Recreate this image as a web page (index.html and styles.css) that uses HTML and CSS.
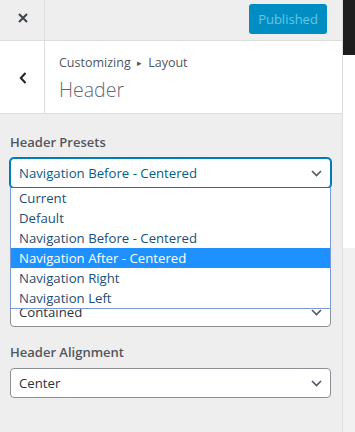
FILE: index.html
```html
<!DOCTYPE html>
<html lang="en">
<head>
<meta charset="utf-8">
<title>Customizer – Header</title>
<link rel="stylesheet" href="styles.css">
</head>
<body>
<div class="app">
  <aside class="sidebar">
    <div class="topbar">
      <button class="icon-btn close" aria-label="Close">
        <svg width="10" height="10" viewBox="0 0 10 10"><path d="M1 1L9 9M9 1L1 9" stroke="#3c434a" stroke-width="2" fill="none"/></svg>
      </button>
      <div class="grow"></div>
      <button class="publish" disabled>Published</button>
    </div>
    <div class="section-head">
      <button class="icon-btn back" aria-label="Back">
        <svg width="8" height="12" viewBox="0 0 8 12"><path d="M6.5 1L1.8 6L6.5 11" stroke="#1d2327" stroke-width="2" fill="none"/></svg>
      </button>
      <div class="titles">
        <div class="crumb">Customizing <span class="arrow">&#9656;</span> Layout</div>
        <div class="title">Header</div>
      </div>
    </div>
    <div class="controls">
      <div class="control presets">
        <div class="label">Header Presets</div>
        <div class="select-wrap">
          <div class="select focused">
            <span>Navigation Before - Centered</span>
            <svg class="chev" width="11" height="7" viewBox="0 0 11 7"><path d="M1 1L5.5 5.5L10 1" stroke="#50575e" stroke-width="1.6" fill="none"/></svg>
          </div>
          <ul class="dropdown">
            <li>Current</li>
            <li>Default</li>
            <li>Navigation Before - Centered</li>
            <li class="active">Navigation After - Centered</li>
            <li>Navigation Right</li>
            <li>Navigation Left</li>
          </ul>
        </div>
      </div>
      <div class="control">
        <div class="select">
          <span>Contained</span>
          <svg class="chev" width="11" height="7" viewBox="0 0 11 7"><path d="M1 1L5.5 5.5L10 1" stroke="#50575e" stroke-width="1.6" fill="none"/></svg>
        </div>
      </div>
      <div class="control">
        <div class="label">Header Alignment</div>
        <div class="select">
          <span>Center</span>
          <svg class="chev" width="11" height="7" viewBox="0 0 11 7"><path d="M1 1L5.5 5.5L10 1" stroke="#50575e" stroke-width="1.6" fill="none"/></svg>
        </div>
      </div>
    </div>
  </aside>
  <div class="preview">
    <div class="preview-bar"></div>
    <div class="preview-page"></div>
  </div>
</div>
</body>
</html>
```
FILE: styles.css
```css
* { box-sizing: border-box; }
html, body { margin: 0; padding: 0; }
body {
  font-family: "Open Sans", "Noto Sans", sans-serif;
  font-size: 13px;
  color: #50575e;
  background: #f1f1f1;
}
.app {
  display: flex;
  height: 432px;
  overflow: hidden;
}
.sidebar {
  width: 343px;
  flex: none;
  background: #eeeeee;
  border-right: 1px solid #dddddd;
  display: flex;
  flex-direction: column;
}
.topbar {
  height: 41px;
  display: flex;
  align-items: flex-start;
  border-bottom: 1px solid #dddddd;
}
.grow { flex: 1; }
.icon-btn {
  width: 45px;
  border: 0;
  border-right: 1px solid #dddddd;
  background: transparent;
  padding: 0;
  display: flex;
  align-items: center;
  justify-content: center;
}
.close { height: 40px; padding-bottom: 4px; padding-left: 1px; }
.publish {
  margin-top: 4px;
  margin-right: 15px;
  width: 78px;
  height: 30px;
  border: 0;
  border-radius: 3px;
  background: #008ec2;
  color: #66c6e4;
  font-family: inherit;
  font-size: 13px;
  padding: 0 0 1px;
}
.section-head {
  height: 73px;
  background: #ffffff;
  border-bottom: 1px solid #dddddd;
  display: flex;
}
.back { height: 72px; padding-top: 1px; padding-left: 1px; }
.titles {
  padding: 13px 0 0 14px;
}
.crumb {
  font-size: 12.5px;
  line-height: 18px;
  color: #50575e;
}
.arrow {
  font-size: 9px;
  position: relative;
  top: -1px;
  margin: 0 3px;
}
.title {
  margin-top: 3px;
  font-size: 19.5px;
  font-weight: 300;
  line-height: 28px;
  color: #646970;
}
.controls {
  padding: 18px 11px 0 10px;
}
.control { margin-bottom: 15px; }
.control.presets { margin-bottom: 109px; }
.label {
  font-size: 13px;
  font-weight: 600;
  line-height: 20px;
  margin-bottom: 6px;
  color: #50575e;
}
.select-wrap { position: relative; }
.select {
  height: 30px;
  border: 1px solid #8c8f94;
  border-radius: 4px;
  background: #ffffff;
  padding: 0 8px 0 8px;
  display: flex;
  align-items: center;
  justify-content: space-between;
  color: #2c3338;
  font-size: 13.2px;
}
.select.focused {
  border-color: #007cba;
  box-shadow: 0 0 0 1px #007cba;
  color: #016087;
}
.chev { margin-top: 1px; }
.dropdown {
  position: absolute;
  left: 0;
  right: 0;
  top: 100%;
  margin: 0;
  padding: 0;
  list-style: none;
  background: #ffffff;
  border: 1px solid #7a9ad6;
  border-top: 0;
  z-index: 2;
}
.dropdown li {
  height: 20px;
  line-height: 20px;
  padding-left: 8px;
  font-size: 13.2px;
  color: #1d4f75;
}
.dropdown li.active {
  background: #1e90ff;
  color: #ffffff;
}
.preview {
  flex: 1;
  display: flex;
  flex-direction: column;
}
.preview-bar {
  height: 55px;
  background: #1e1e1e;
}
.preview-page {
  height: 193px;
  background: #ffffff;
}
```
